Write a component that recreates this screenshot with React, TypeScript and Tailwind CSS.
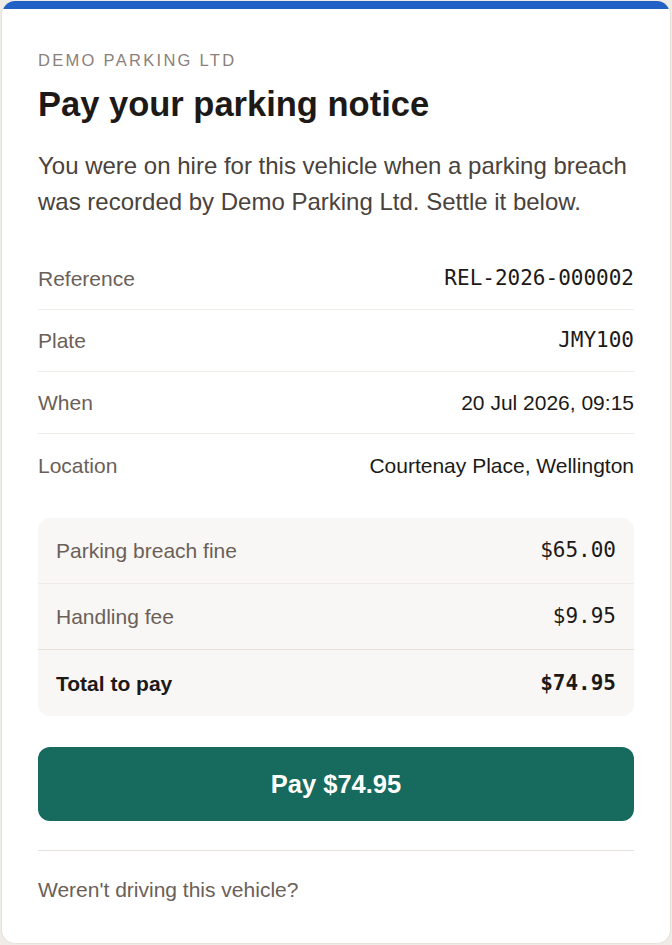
import React from "react";

const sans = { fontFamily: '"Liberation Sans", Arial, sans-serif' };

function DetailRow({ label, value, mono, last }: { label: string; value: string; mono?: boolean; last?: boolean }) {
  return (
    <div className={`flex items-center justify-between h-[62px] ${last ? "" : "border-b border-[#efebe6]"}`}>
      <span className="text-[21px] leading-[31px] text-[#6b6058]">{label}</span>
      <span
        className={`text-[21px] leading-[31px] text-[#1c1917] ${mono ? "font-['DejaVu_Sans_Mono',monospace]" : ""}`}
      >
        {value}
      </span>
    </div>
  );
}

function FeeRow({ label, value, bold, border }: { label: string; value: string; bold?: boolean; border?: string }) {
  return (
    <div className={`flex items-center justify-between h-[66px] px-[18px] ${border ?? ""}`}>
      <span className={`text-[21px] leading-[31px] ${bold ? "font-bold text-[#1c1917]" : "text-[#6b6058]"}`}>{label}</span>
      <span className={`text-[21px] leading-[31px] text-[#1c1917] font-['DejaVu_Sans_Mono',monospace] ${bold ? "font-bold" : ""}`}>
        {value}
      </span>
    </div>
  );
}

export default function App() {
  return (
    <div className="min-h-[945px] bg-[#efebe6] p-[1px]" style={sans}>
      <div className="rounded-[14px] overflow-hidden bg-white border border-[#e6e1da] border-t-0">
        <div className="h-[8px] bg-[#2160c4]" />
        <div className="px-[36px] pt-[39px] pb-[38px]">
          <div className="text-[16.5px] leading-[25px] tracking-[2.3px] uppercase text-[#8a8079]">Demo Parking Ltd</div>
          <h1 className="mt-[11px] text-[34.5px] leading-[41px] font-bold text-[#1c1917]">Pay your parking notice</h1>
          <p className="mt-[23px] text-[24px] leading-[36px] text-[#4a423c]">
            You were on hire for this vehicle when a parking breach was recorded by Demo Parking Ltd. Settle it below.
          </p>
          <div className="mt-[28px]">
            <DetailRow label="Reference" value="REL-2026-000002" mono />
            <DetailRow label="Plate" value="JMY100" mono />
            <DetailRow label="When" value="20 Jul 2026, 09:15" />
            <DetailRow label="Location" value="Courtenay Place, Wellington" last />
          </div>
          <div className="mt-[22px] rounded-[12px] bg-[#f9f7f5]">
            <FeeRow label="Parking breach fine" value="$65.00" border="border-b border-[#efebe6]" />
            <FeeRow label="Handling fee" value="$9.95" border="border-b border-[#e6e0d8]" />
            <FeeRow label="Total to pay" value="$74.95" bold />
          </div>
          <button className="mt-[31px] w-full h-[74px] rounded-[12px] bg-[#166a5e] text-white text-[25.5px] font-bold">
            Pay $74.95
          </button>
          <div className="mt-[29px] border-t border-[#e6e1da]" />
          <div className="mt-[23px] text-[21px] leading-[31px] text-[#6b6058]">Weren't driving this vehicle?</div>
        </div>
      </div>
    </div>
  );
}
